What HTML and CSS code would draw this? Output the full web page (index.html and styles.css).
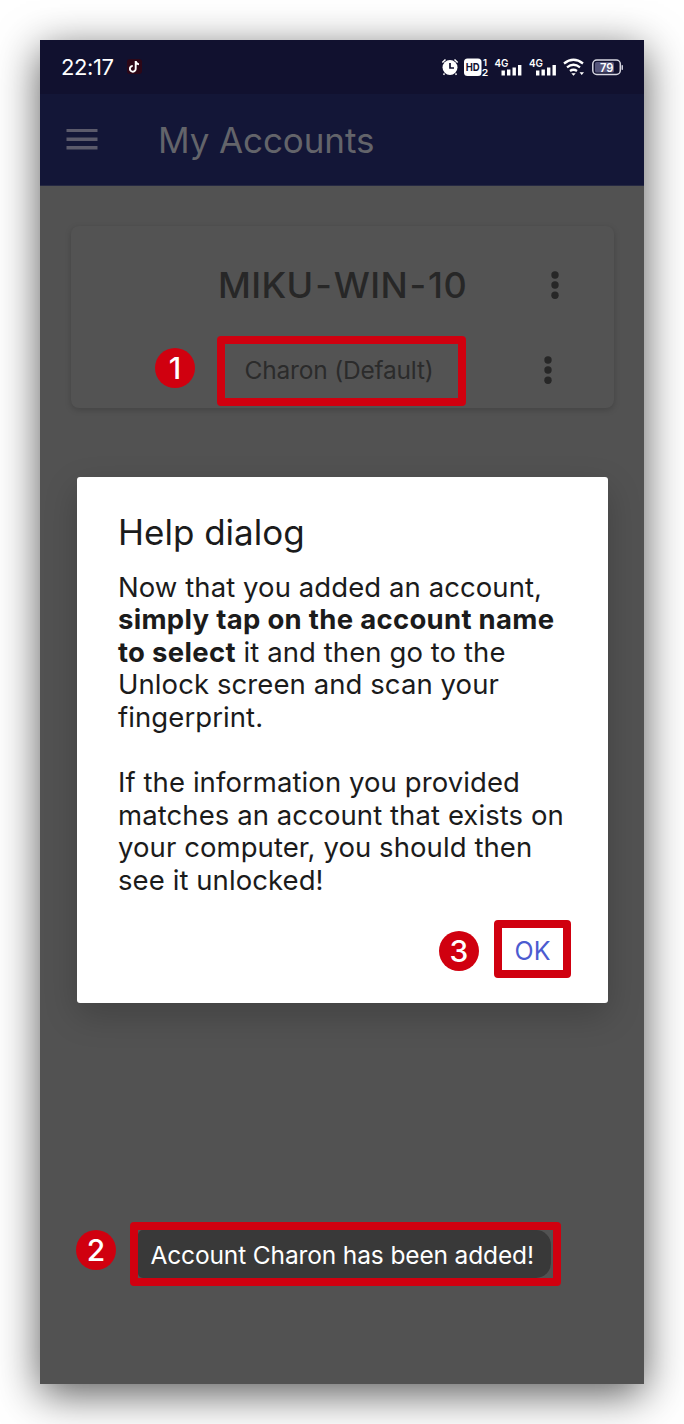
FILE: index.html
```html
<!DOCTYPE html>
<html lang="en">
<head>
<meta charset="utf-8">
<title>My Accounts</title>
<link rel="stylesheet" href="styles.css">
</head>
<body>
<main class="phone">
  <div class="status">
    <span class="clock">22:17</span>
    <svg class="note" viewBox="0 0 18 18"><rect x="1" y="1" width="15" height="15" rx="3" fill="#2d0717"/><path d="M9.7 3v7.6a2.9 2.9 0 1 1-2.9-2.7M9.7 3.2c.3 2 1.500 2.900 3.300 3.200" fill="none" stroke="#fff" stroke-width="1.900"/></svg>
    <svg class="icons" viewBox="0 0 184 24" fill="#fff">
      <g>
        <circle cx="10" cy="12.500" r="7.500"/>
        <path d="M2.300 7.500 5.500 4.500M17.700 7.500 14.500 4.500M4.500 18.500l-1 1.300M15.500 18.500l1 1.300" stroke="#fff" stroke-width="1.500"/>
        <path d="M10 8v5h4" fill="none" stroke="#11112f" stroke-width="1.700"/>
      </g>
      <rect x="24" y="3.500" width="17.500" height="17.500" rx="3.500"/>
      <text class="hd" x="25.700" y="16" textLength="14" lengthAdjust="spacingAndGlyphs">HD</text>
      <text class="sim" x="43" y="11">1</text>
      <text class="sim" x="41.800" y="20.500" textLength="6.500" lengthAdjust="spacingAndGlyphs">2</text>
      <text class="net" x="54.500" y="11.500" textLength="14" lengthAdjust="spacingAndGlyphs">4G</text>
      <path d="M61.500 15.500h3.400v5h-3.400zM67 14.500h3.400v6h-3.400zM72.500 12.500h3.400v8h-3.400zM78 10h3.400v10.500h-3.400z"/>
      <text class="net" x="89" y="11.500" textLength="14" lengthAdjust="spacingAndGlyphs">4G</text>
      <path d="M96 15.500h3.400v5h-3.400zM101.500 14.500h3.400v6h-3.400zM107 12.500h3.400v8h-3.400zM112.500 10h3.400v10.500h-3.400z"/>
      <path d="M124 8.500q9.500-7.500 19 0M127 12.300q6.500-5 13 0M130 16q3.500-2.500 7 0" fill="none" stroke="#fff" stroke-width="2.300"/>
      <path d="M131.300 18.200h4.400l-2.200 2.600zM139.500 17.200h4.500l-2.250 2.800z"/>
      <rect x="152.800" y="5" width="27.500" height="14.500" rx="4" fill="none" stroke="#d8d8e2" stroke-width="1.500"/>
      <rect x="155" y="7" width="19" height="10.500" rx="1.500" fill="#55557a"/>
      <rect x="181.500" y="10" width="1.500" height="5" rx=".7" fill="#c8c8d5"/>
      <text class="pct" x="160" y="16.500" textLength="13.500" lengthAdjust="spacingAndGlyphs">79</text>
    </svg>
  </div>
  <header class="bar">
    <svg class="menu" viewBox="0 0 32 22"><path d="M0.500 1.400h31M0.500 10.300h31M0.500 18.800h31" stroke="#5b5a6b" stroke-width="3.400"/></svg>
    <h1>My Accounts</h1>
  </header>
  <section class="card">
    <div class="host"><h2>MIKU<i>-</i>WIN<i>-</i>10</h2><svg class="dots" viewBox="0 0 8 28"><circle cx="4" cy="4" r="3.700"/><circle cx="4" cy="14" r="3.700"/><circle cx="4" cy="24.200" r="3.700"/></svg></div>
    <div class="user"><span class="badge">1</span><span class="mark account">Charon (Default)</span><svg class="dots" viewBox="0 0 8 28"><circle cx="4" cy="4" r="3.700"/><circle cx="4" cy="14" r="3.700"/><circle cx="4" cy="24.200" r="3.700"/></svg></div>
  </section>
  <section class="dialog">
    <h3>Help dialog</h3>
    <p>Now that you added an account,<br><b>simply tap on the account name</b><br><b>to select</b> it and then go to the<br>Unlock screen and scan your<br>fingerprint.</p>
    <p>If the information you provided<br>matches an account that exists on<br>your computer, you should then<br>see it unlocked!</p>
    <div class="actions"><span class="badge">3</span><span class="mark ok">OK</span></div>
  </section>
  <div class="notice"><span class="badge">2</span><div class="mark frame"><span class="toast">Account Charon has been added!</span></div></div>
</main>
</body>
</html>
```
FILE: styles.css
```css
* { box-sizing: border-box; }
body { margin: 0; padding: 40px; height: 1424px; overflow: hidden; background: #fff; font-family: Inter, "Liberation Sans", sans-serif; }
h1, h2, h3, p { margin: 0; font-weight: 400; white-space: nowrap; }
svg { display: block; flex: none; }
.phone { width: 604px; height: 1344px; background: #525252; box-shadow: 0 10px 40px rgba(0,0,0,.65); display: flex; flex-direction: column; }
.status { height: 54px; background: #11112f; display: flex; align-items: center; padding: 0 20px 0 21px; }
.clock { color: #fff; font-size: 22px; width: 64px; letter-spacing: -.4px; white-space: nowrap; }
.note { width: 18px; height: 18px; margin-left: 1px; }
.icons { width: 184px; height: 24px; margin-left: auto; }
.hd { font-size: 11px; font-weight: 700; fill: #11112f; }
.sim { font-size: 9.500px; font-weight: 600; }
.net { font-size: 11px; font-weight: 600; }
.pct { font-size: 11.500px; font-weight: 600; }
.bar { height: 92px; background: #131637; display: flex; align-items: center; padding-left: 26px; border-bottom: 1px solid #252842; }
.menu { width: 32px; height: 22px; margin-right: 60px; }
h1 { font-size: 35px; color: #63646a; letter-spacing: -.1px; }
.card { margin: 40px 30px 0 31px; height: 182px; border-radius: 8px; background: #535353; box-shadow: 0 2px 6px rgba(0,0,0,.18); }
.host { height: 110px; padding: 8px 55px 0 147px; display: flex; align-items: center; justify-content: space-between; }
h2 { font-size: 36px; font-weight: 450; color: #272727; letter-spacing: .4px; }
h2 i { font-style: normal; margin: 0 1.500px; }
.dots { width: 8px; height: 28px; fill: #272727; }
.user { height: 70px; padding: 0 62px 0 84px; display: flex; align-items: center; }
.user .dots { margin-left: auto; margin-top: -2px; }
.mark { border: 8px solid #d0000f; border-radius: 4px; display: flex; align-items: center; justify-content: center; white-space: nowrap; }
.badge { width: 40px; height: 40px; border-radius: 50%; background: #d0000f; color: #fff; font-size: 30px; font-weight: 500; display: flex; align-items: center; justify-content: center; flex: none; }
.user .badge { margin-top: -6px; }
.account { width: 249px; height: 70px; margin-left: 22px; font-size: 24.500px; font-weight: 400; letter-spacing: -.2px; padding: 0 5px 2px 0; color: #2b2b2b; }
.dialog { margin: 69px 36px 0 37px; height: 526px; background: #fff; border-radius: 3px; padding: 31px 37px 0 41px; color: #1b1b1b; box-shadow: 0 12px 34px rgba(0,0,0,.2); }
h3 { font-size: 35px; line-height: 48px; margin-bottom: 14.600px; }
p { font-size: 27.500px; line-height: 32.600px; font-weight: 380; letter-spacing: .08px; margin-bottom: 32.600px; }
b { font-weight: 700; letter-spacing: .3px; }
.actions { display: flex; align-items: center; justify-content: flex-end; margin-top: -9.600px; gap: 15px; }
.actions .badge { margin-top: 4px; }
.ok { width: 77px; height: 58px; font-size: 25px; padding-top: 4px; color: #4c5bd0; }
.notice { display: flex; margin: 219px 0 0 36px; }
.notice .badge { margin-top: 8px; margin-right: 14px; }
.frame { width: 431px; height: 64px; justify-content: flex-start; }
.toast { width: 413px; height: 48px; line-height: 51px; padding-left: 12.500px; border-radius: 5px 15px 15px 5px; background: #393939; color: #fff; font-size: 24.500px; font-weight: 380; letter-spacing: -.14px; }
```
